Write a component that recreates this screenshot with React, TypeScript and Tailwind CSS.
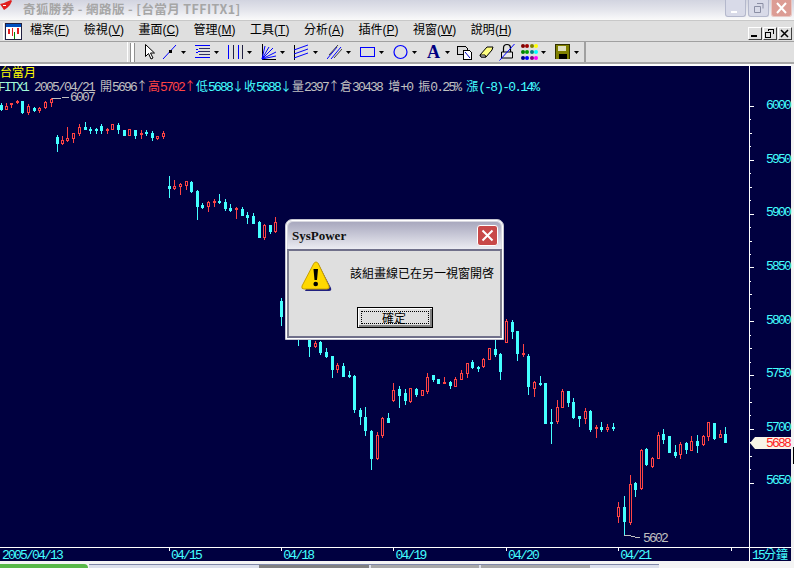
import React from 'react'

type Candle = [number, number, number, number, number, 'r' | 'c']

// [x, wick top, wick bottom, body top, body bottom, colour] in page pixels
const candles: Candle[] = [
  [1, 103, 110, 105, 109, 'c'], [6, 103, 109, 106, 109, 'r'], [11, 103, 107, 103, 104, 'r'], [17, 100, 103, 101, 102, 'r'],
  [22, 101, 113, 101, 112, 'c'], [28, 104, 114, 106, 112, 'r'], [34, 107, 111, 108, 110, 'c'], [39, 107, 112, 108, 110, 'r'],
  [45, 101, 108, 102, 107, 'r'], [51, 98, 106, 99, 102, 'r'],
  [57, 135, 151, 137, 143, 'c'], [62, 136, 144, 140, 143, 'r'], [67, 127, 141, 138, 140, 'r'], [73, 133, 142, 133, 138, 'r'],
  [79, 124, 135, 127, 133, 'r'], [85, 122, 129, 127, 129, 'c'], [90, 127, 133, 129, 130, 'c'], [96, 128, 133, 129, 130, 'c'],
  [101, 124, 133, 126, 130, 'c'], [107, 128, 133, 129, 130, 'r'], [112, 124, 129, 124, 129, 'r'], [118, 123, 133, 125, 129, 'c'],
  [124, 130, 135, 130, 135, 'c'], [129, 129, 135, 129, 135, 'r'], [135, 130, 138, 130, 135, 'c'], [141, 130, 138, 133, 134, 'r'],
  [146, 130, 135, 132, 133, 'c'], [152, 131, 140, 133, 137, 'c'], [157, 136, 139, 136, 138, 'r'], [163, 131, 138, 133, 136, 'r'],
  [169, 176, 197, 186, 188, 'c'], [174, 180, 189, 186, 188, 'r'], [180, 183, 194, 184, 186, 'r'], [186, 181, 189, 181, 185, 'r'],
  [191, 181, 192, 182, 191, 'c'], [197, 190, 219, 191, 206, 'c'], [202, 203, 208, 205, 207, 'c'], [208, 201, 211, 202, 206, 'r'],
  [214, 199, 206, 201, 202, 'r'], [219, 194, 203, 201, 202, 'c'], [225, 199, 210, 202, 208, 'c'], [230, 204, 211, 208, 210, 'c'],
  [236, 207, 218, 208, 209, 'r'], [242, 207, 215, 209, 215, 'c'], [247, 212, 223, 215, 217, 'c'], [253, 213, 223, 216, 223, 'c'],
  [259, 221, 237, 222, 237, 'c'], [264, 224, 239, 225, 237, 'r'], [270, 225, 233, 225, 231, 'c'], [275, 217, 232, 222, 231, 'r'],
  [281, 298, 325, 301, 316, 'c'], [298, 335, 345, 335, 336, 'c'], [309, 335, 356, 335, 346, 'c'], [315, 341, 347, 343, 346, 'r'],
  [320, 341, 354, 342, 352, 'c'], [326, 348, 357, 352, 356, 'c'], [332, 356, 377, 356, 369, 'c'], [337, 363, 372, 365, 369, 'r'],
  [343, 363, 376, 366, 376, 'c'], [349, 371, 377, 375, 376, 'c'], [354, 375, 412, 376, 409, 'c'], [360, 408, 424, 410, 416, 'c'],
  [365, 407, 435, 417, 430, 'c'], [371, 430, 469, 431, 458, 'c'], [377, 432, 459, 435, 458, 'r'], [382, 417, 437, 418, 435, 'r'],
  [388, 413, 422, 418, 422, 'c'], [393, 383, 401, 390, 400, 'r'], [399, 386, 407, 389, 395, 'c'], [405, 389, 404, 393, 400, 'c'],
  [410, 388, 402, 388, 401, 'r'], [416, 388, 396, 389, 394, 'c'], [422, 390, 395, 390, 395, 'r'], [427, 373, 393, 377, 391, 'r'],
  [433, 375, 381, 375, 379, 'c'], [438, 379, 383, 379, 383, 'c'], [444, 377, 383, 382, 383, 'r'], [450, 381, 388, 382, 385, 'c'],
  [455, 377, 386, 379, 386, 'r'], [461, 370, 379, 373, 379, 'r'], [467, 363, 377, 363, 373, 'r'], [472, 360, 368, 362, 367, 'c'],
  [478, 366, 371, 367, 368, 'c'], [483, 358, 367, 359, 366, 'r'], [489, 348, 359, 348, 359, 'r'], [495, 335, 356, 349, 354, 'c'],
  [500, 353, 379, 354, 371, 'c'], [506, 319, 342, 321, 342, 'r'], [512, 320, 338, 322, 331, 'c'], [517, 331, 360, 331, 353, 'c'],
  [523, 344, 356, 353, 354, 'r'], [528, 354, 394, 356, 386, 'c'], [534, 381, 396, 382, 388, 'r'], [540, 376, 385, 383, 384, 'c'],
  [545, 383, 423, 383, 423, 'c'], [551, 409, 443, 422, 423, 'c'], [557, 400, 423, 407, 421, 'r'], [562, 389, 407, 391, 407, 'r'],
  [568, 391, 406, 391, 402, 'c'], [573, 398, 418, 402, 417, 'c'], [579, 416, 426, 416, 418, 'c'], [585, 408, 423, 411, 418, 'r'],
  [590, 410, 431, 411, 429, 'c'], [596, 425, 437, 427, 428, 'r'], [601, 422, 431, 427, 429, 'c'], [607, 424, 431, 427, 429, 'r'],
  [613, 423, 430, 427, 428, 'c'],
  [618, 502, 522, 507, 516, 'r'], [624, 496, 535, 507, 521, 'c'], [630, 475, 524, 484, 522, 'r'], [635, 482, 496, 483, 489, 'c'],
  [641, 449, 489, 450, 488, 'r'], [646, 448, 465, 449, 464, 'c'], [652, 457, 467, 458, 466, 'r'], [658, 432, 458, 435, 458, 'r'],
  [663, 429, 443, 434, 439, 'c'], [669, 436, 452, 436, 452, 'c'], [675, 445, 457, 452, 455, 'c'], [680, 442, 458, 444, 454, 'r'],
  [686, 442, 453, 443, 449, 'c'], [691, 436, 450, 441, 450, 'r'], [697, 435, 452, 441, 445, 'c'], [703, 435, 445, 436, 444, 'r'],
  [708, 422, 440, 422, 436, 'r'], [714, 423, 439, 423, 438, 'c'], [720, 430, 437, 434, 437, 'r'], [725, 427, 442, 434, 442, 'c'],
]

const RED = '#ff4444'
const CYAN = '#44ffff'
const NAVY = '#000040'

// half width runs sit on a 6px grid, CJK and arrows on a 12px grid
const Mono = ({ text }: { text: string }) => {
  const runs = text.match(/[\x20-\x7e]+|[^\x20-\x7e]/g) || []
  return (
    <>
      {runs.map((r, i) =>
        /[\x20-\x7e]/.test(r[0]) ? (
          <span key={i} className="font-['Liberation_Mono',monospace] text-[13px] tracking-[-1.8px] whitespace-pre">{r}</span>
        ) : (
          <span key={i} className="inline-block w-3 text-center text-[12px] font-['Noto_Sans_CJK_TC',sans-serif]">{r}</span>
        )
      )}
    </>
  )
}

const Caret = () => (
  <svg width="5" height="3" viewBox="0 0 5 3" className="ml-1 shrink-0"><path d="M0 0h5L2.5 3z" fill="#000" /></svg>
)

const Ico = ({ children, w = 15 }: { children: React.ReactNode; w?: number }) => (
  <svg width={w} height="16" viewBox={`0 0 ${w} 16`} className="shrink-0" shapeRendering="crispEdges">{children}</svg>
)

const Tool = ({ children }: { children: React.ReactNode }) => (
  <div className="flex items-center w-[33px] shrink-0">
    {children}
    <Caret />
  </div>
)

const menus: [string, string][] = [
  ['檔案', 'F'], ['檢視', 'V'], ['畫面', 'C'], ['管理', 'M'], ['工具', 'T'], ['分析', 'A'], ['插件', 'P'], ['視窗', 'W'], ['說明', 'H'],
]

const info: [string, string][] = [
  ['FITX1', '#a0f8d8'], [' 2005/04/21 開5696↑', '#c0c0c0'], ['高5702↑', RED], ['低5688↓收5688↓', CYAN],
  ['量2397↑倉30438 增+0 振0.25% ', '#c0c0c0'], ['漲(-8)-0.14%', CYAN],
]

const dots = [
  ['#800000', '#a00000', '#808000', '#ffff00'],
  ['#008000', '#00a000', '#008080', '#00ffff'],
  ['#000080', '#0000ff', '#800080', '#ff00ff'],
]

const MdiButton = ({ children }: { children: React.ReactNode }) => (
  <div className="w-[14px] h-[13px] bg-[#dfdfdf] border border-t-white border-l-white border-r-[#404040] border-b-[#404040] flex items-center justify-center">
    <svg width="10" height="9" viewBox="0 0 10 9" shapeRendering="crispEdges">{children}</svg>
  </div>
)

const CapButton = ({ children, red }: { children: React.ReactNode; red?: boolean }) => (
  <div className={`w-[21px] h-[17px] rounded-b-[3px] border border-t-0 flex items-center justify-center ${red ? 'bg-[#dc9c94] border-[#e8c8c4]' : 'bg-[#d8dae8] border-[#b4b8cc]'}`}>
    <svg width="13" height="12" viewBox="0 0 13 12">{children}</svg>
  </div>
)

export default function App() {
  return (
    <div className="w-[794px] h-[568px] overflow-hidden flex flex-col bg-[#f4f4f4] font-['Liberation_Sans','Noto_Sans_CJK_TC',sans-serif] text-black">
      {/* Inactive title bar */}
      <div className="h-[20px] shrink-0 flex items-start bg-gradient-to-b from-[#d2d4e0] via-[#e4e5ec] to-[#fafafa]">
        <svg width="13" height="11" viewBox="0 0 13 11" className="shrink-0">
          <path d="M0 4l4-1 2-1 5-2 1 1-2 4-3 3-3 2-2-3z" fill="#e02020" />
          <path d="M3 5h3v1H3z" fill="#fff" />
        </svg>
        <span className="ml-[10px] text-[12.5px] tracking-[0.4px] leading-[18px] font-bold text-[#a6a6a6] whitespace-pre font-['Noto_Sans_CJK_TC',sans-serif]">奇狐勝券 - 網路版 - [台當月 TFFITX1]</span>
        <div className="ml-auto mr-[2px] flex gap-[2px]">
          <CapButton><path d="M2 9h6v2H2z" fill="#fff" /></CapButton>
          <CapButton>
            <path d="M5 1.5h6v5M2.5 4.5h6v6h-6z" fill="none" stroke="#8a8ea4" />
          </CapButton>
          <CapButton red><path d="M2 1l9 10M11 1l-9 10" stroke="#fff" strokeWidth="2" /></CapButton>
        </div>
      </div>

      {/* Menu bar */}
      <div className="h-[21px] shrink-0 flex items-center bg-[#dfdfdf] border-t border-[#c8c8c8]">
        <div className="ml-[3px] w-px h-[17px] bg-white" />
        <div className="ml-[1px] w-[17px] h-[17px] border border-[#202040] bg-white flex flex-col">
          <svg width="15" height="15" viewBox="0 0 15 15" shapeRendering="crispEdges">
            <path d="M0 0h15v3H0z" fill="#0050c0" />
            <path d="M2 5h2v5H2zM6 4h1v8H6zM11 4h2v6h-2z" fill="#e02020" />
            <path d="M8 8h1v7H8z" fill="#008000" />
          </svg>
        </div>
        <div className="ml-[8px] mb-[3px] flex gap-[14.5px] text-[12px]">
          {menus.map(([name, key]) => (
            <span key={key} className="whitespace-nowrap font-['Noto_Sans_CJK_TC',sans-serif]">
              {name}
              <span className="font-['Liberation_Sans',sans-serif]">(<span className="underline">{key}</span>)</span>
            </span>
          ))}
        </div>
        <div className="ml-auto mr-[2px] mt-[5px] flex gap-px">
          <MdiButton><path d="M1 6h6v2H1z" fill="#000" /></MdiButton>
          <MdiButton><path d="M3 0h6v1H3zM3 1h1v1H3zM8 1h1v4H8zM0 3h6v1H0zM0 4h1v5H0zM5 4h1v5H5zM0 8h6v1H0z" fill="#000" /></MdiButton>
          <MdiButton><path d="M1 1l7 7M8 1l-7 7" stroke="#000" strokeWidth="1.5" shapeRendering="auto" /></MdiButton>
        </div>
      </div>

      {/* Drawing toolbar */}
      <div className="h-[23px] shrink-0 flex bg-[#e0e0e0] border-t border-[#a0a0a0] border-b-2 border-b-[#a8a8a8]">
        <div className="ml-[127px] w-[459px] flex items-center border-l border-white border-r-2 border-r-[#a0a0a0] pl-[2px]">
          <div className="w-[5px] h-[19px] border-x border-[#909090] bg-white shrink-0" />
          <svg width="11" height="16" viewBox="0 0 11 16" className="ml-[9px] shrink-0">
            <path d="M1.5 .5v12l3-3 2.5 5.500 2-1-2.500-5h4z" fill="#fff" stroke="#000" />
          </svg>
          <div className="ml-[7px] flex items-center">
            <Tool>
              <Ico><path d="M14 1L1 15" stroke="#0000ff" shapeRendering="auto" /><path d="M7 6h3v3H7z" fill="#000" /></Ico>
            </Tool>
            <Tool>
              <Ico>
                <path d="M0 1h15v1H0zM0 13h15v1H0z" fill="#0000ff" />
                <path d="M4 4h11v1H4zM4 7h11v1H4zM4 10h11v1H4z" fill="#303060" />
                <path d="M1 5h2v1H1zM3 7h2v1H3zM1 8h2v1H1z" fill="#0000ff" />
              </Ico>
            </Tool>
            <Tool>
              <Ico>
                <path d="M0 1h1v14H0zM10 1h1v14h-1z" fill="#0000ff" />
                <path d="M5 1h1v14H5zM14 1h1v14h-1z" fill="#202040" />
              </Ico>
            </Tool>
            <Tool>
              <Ico>
                <path d="M1 0v15h14" fill="none" stroke="#000" />
                <path d="M1 15L4 2M1 15L8 3M1 15L12 4M1 15L15 8M1 15L15 12" stroke="#0000ff" shapeRendering="auto" />
              </Ico>
            </Tool>
            <Tool>
              <Ico>
                <path d="M0 1h1v15H0z" fill="#000" />
                <path d="M0 6L14 1M0 10L14 5M0 14L14 9" stroke="#0000ff" shapeRendering="auto" />
              </Ico>
            </Tool>
            <Tool>
              <Ico>
                <path d="M0 15L10 3M4 15L14 3" stroke="#0000ff" shapeRendering="auto" />
                <path d="M2 11L11 1M7 14L15 5" stroke="#404040" shapeRendering="auto" />
              </Ico>
            </Tool>
            <Tool>
              <Ico><path d="M.5 3.500h14v9H.5z" fill="none" stroke="#0000ff" /></Ico>
            </Tool>
            <Tool>
              <svg width="15" height="16" viewBox="0 0 15 16" className="shrink-0"><circle cx="7.500" cy="8" r="6.500" fill="none" stroke="#0000ff" strokeWidth="1.200" /></svg>
            </Tool>
            <Tool>
              <span className="w-[15px] text-center text-[18px] leading-none font-bold text-[#000080] font-['Liberation_Serif',serif]">A</span>
            </Tool>
          </div>
          <div className="flex items-center ml-[-2px]">
            <Ico w={15}>
              <path d="M.5 2.500h8l2 2v6h-10z" fill="#d8d8d8" stroke="#000" />
              <path d="M6.500 6.500h6l2 2v7h-8z" fill="#fff" stroke="#000" />
              <path d="M8 8l5 6" stroke="#0000c0" shapeRendering="auto" />
            </Ico>
            <svg width="15" height="16" viewBox="0 0 15 16" className="ml-[7px] shrink-0">
              <path d="M1 11L8 3h6l-1 3-6 7H2z" fill="#ffff80" stroke="#000" />
              <path d="M1 11h5l1 2H2z" fill="#fff" stroke="#000" />
            </svg>
            <svg width="16" height="18" viewBox="0 0 16 18" className="ml-[5px] shrink-0">
              <path d="M4.500 9V5a3.500 3.500 0 0 1 7 0v4" fill="none" stroke="#000" strokeWidth="1.200" />
              <path d="M2.500 9h11v6h-11z" fill="#e8e8e8" stroke="#000" />
              <path d="M.5 17.500L15.500 1" stroke="#0000ff" />
            </svg>
          </div>
          <div className="ml-[6px] flex items-center">
            <div className="flex flex-col gap-[2px] mr-[-2px]">
              {dots.map((row, i) => (
                <div key={i} className="flex">
                  {row.map((c) => (
                    <svg key={c} width="4" height="4" viewBox="0 0 4 4" className="mr-[0.4px]"><circle cx="2" cy="2" r="2" fill={c} /></svg>
                  ))}
                </div>
              ))}
            </div>
            <Caret />
          </div>
          <div className="ml-[9px] flex items-center">
            <Ico>
              <path d="M0 1h15v14H0z" fill="#808000" stroke="none" />
              <path d="M3 2h8v5H3z" fill="#e0e0c0" />
              <path d="M4 10h8v5H4z" fill="#000" />
              <path d="M0 0h15v1H0zM0 0h1v15H0zM14 0h1v15h-1z" fill="#303000" />
            </Ico>
            <Caret />
          </div>
        </div>
      </div>

      {/* Chart window */}
      <div className="relative w-[791px] h-[497px] shrink-0 flex flex-col bg-[#000040]">
        <svg width="791" height="497" viewBox="0 64 791 497" className="absolute left-0 top-0" shapeRendering="crispEdges">
          {candles.map(([x, wt, wb, bt, bb, c], i) => {
            const color = c === 'r' ? RED : CYAN
            const h = bb - bt + 1
            return (
              <g key={i}>
                <rect x={x} y={wt} width="1" height={wb - wt + 1} fill={color} />
                <rect x={x - 1} y={bt} width="3" height={h} fill={color} />
                {c === 'r' && h > 2 && <rect x={x} y={bt + 1} width="1" height={h - 2} fill={NAVY} />}
              </g>
            )
          })}
          {/* leader lines to the high and low */}
          <path d="M52 98h9M62 97h7M624 535h7M631 536h4M635 537h5" stroke="#c0c0c0" fill="none" />
          {/* price ticks */}
          {Array.from({ length: 29 }).map((_, i) => {
            const y = Math.round(106 + i * 13.45)
            const w = i % 4 === 0 ? 4 : i % 2 === 0 ? 2 : 1
            return <rect key={i} x={750} y={y} width={w} height="1" fill="#fff" />
          })}
          {[169, 281, 393, 506, 618, 731].map((x) => (
            <rect key={x} x={x} y={548} width="1" height="3" fill="#fff" />
          ))}
        </svg>

        <div className="relative h-[2px] bg-white shrink-0" />

        <div className="relative flex-1 flex min-h-0">
          <div className="w-[749px] leading-[14px] mt-[-1px]">
            <div className="text-[#ffff00] h-[14px]"><Mono text="台當月" /></div>
            <div className="h-[14px] ml-[-2px] whitespace-nowrap">
              {info.map(([t, c]) => (
                <span key={t} style={{ color: c }}><Mono text={t} /></span>
              ))}
            </div>
          </div>
          <div className="w-[42px] border-l border-white flex flex-col pt-[13px] text-[#44ffff]">
            {[6000, 5950, 5900, 5850, 5800, 5750, 5700, 5650].map((v) => (
              <div key={v} className="h-[53.6px] shrink-0 flex items-center justify-end pr-[1px] leading-none">
                <Mono text={String(v)} />
              </div>
            ))}
          </div>

          <span className="absolute left-[70px] top-[23px] text-[#c0c0c0] leading-[14px]"><Mono text="6007" /></span>
          <span className="absolute left-[643px] top-[464px] text-[#c0c0c0] leading-[14px]"><Mono text="5602" /></span>

          {/* last price tag */}
          <div className="absolute left-[750px] top-[371px] w-[41px] h-[12px] flex items-center">
            <svg width="5" height="12" viewBox="0 0 5 12" className="shrink-0"><path d="M5 0v12L0 6z" fill="#f8f4e8" /></svg>
            <div className="flex-1 h-full bg-[#f8f4e8] flex items-center justify-end pr-[1px] text-[#ff2020] leading-none">
              <Mono text="5688" />
            </div>
          </div>
        </div>

        <div className="relative h-[14px] shrink-0 flex border-t border-white text-[#44ffff] leading-[12px]">
          <div className="w-[169px] pl-[2px]"><Mono text="2005/04/13" /></div>
          {['04/15', '04/18', '04/19', '04/20', '04/21'].map((d) => (
            <div key={d} className="w-[112.3px] pl-[2px]"><Mono text={d} /></div>
          ))}
          <div className="w-[18.500px]" />
          <div className="w-[42px] border-l border-white pl-[2px] whitespace-nowrap"><Mono text="15分鐘" /></div>
        </div>

        {/* Message box */}
        <div className="absolute left-[285px] top-[155px] w-[219px] h-[121px] flex flex-col rounded-t-[7px] border border-[#c4c4d0] bg-[#d8d8e0] shadow-[inset_0_0_0_1px_#ffffff]">
          <div className="h-[27px] shrink-0 mx-[2px] mt-[2px] flex items-center justify-between rounded-t-[5px] bg-gradient-to-b from-[#a8a8be] to-[#ececf2] pl-[4px] pr-[3px]">
            <span className="font-['Liberation_Serif',serif] font-bold text-[13px] text-[#101010]">SysPower</span>
            <div className="w-[21px] h-[21px] rounded-[3px] border border-white bg-[#c84848] flex items-center justify-center">
              <svg width="13" height="13" viewBox="0 0 13 13"><path d="M1.500 1.500l10 10M11.500 1.500l-10 10" stroke="#fff" strokeWidth="2" /></svg>
            </div>
          </div>
          <div className="flex-1 mx-[1px] mb-px bg-[#dfdfdf] border-2 border-[#70708a] border-x-[#808090] pt-[10px] flex flex-col">
            <div className="flex items-center pl-[12px]">
              <svg width="31" height="31" viewBox="0 0 31 31" className="shrink-0">
                <path d="M17 2L30 27q1 3-2 3H4z" fill="#202080" />
                <path d="M15 1q1.500 0 2.500 2L28 25q1 3-2 3H3q-3 0-2-3L12.500 3Q13.500 1 15 1z" fill="#ffd800" stroke="#c8a000" />
                <path d="M12.500 8h4.500l-1 11h-2.500z" fill="#000" />
                <circle cx="14.700" cy="23" r="2.300" fill="#000" />
              </svg>
              <span className="ml-[18px] mb-[7px] text-[12px] leading-none font-['Noto_Sans_CJK_TC',sans-serif] whitespace-nowrap">該組畫線已在另一視窗開啓</span>
            </div>
            <div className="mt-[15px] ml-[68px] w-[76px] h-[21px] border border-black bg-[#dfdfdf] shadow-[inset_1px_1px_0_#ffffff,inset_-2px_-2px_0_#808080] flex items-center justify-center p-[3px]">
              <div className="w-full h-full border border-dotted border-black flex items-center justify-center pr-[2px] text-[12px] leading-none font-['Noto_Sans_CJK_TC',sans-serif]">確定</div>
            </div>
          </div>
        </div>

        {/* edge of the window behind */}
        <div className="absolute left-[793px] top-[383px] w-px h-[17px] bg-black" />
      </div>

      {/* Taskbar remains */}
      <div className="flex-1 flex flex-col">
        <div className="h-[3px] shrink-0" />
        <div className="flex-1 flex items-stretch">
          <div className="w-[88px] rounded-tr-[4px] bg-[#58b848]" />
          <div className="ml-px w-[570px] flex border-t border-[#8088a8] bg-[#dce0ec]">
            <div className="ml-[170px] w-[110px] bg-[#808080]" />
            <div className="ml-[2px] w-[108px] bg-[#a8a8a8]" />
            <div className="ml-[2px] w-[109px] bg-[#a8a8a8]" />
          </div>
        </div>
      </div>
    </div>
  )
}
